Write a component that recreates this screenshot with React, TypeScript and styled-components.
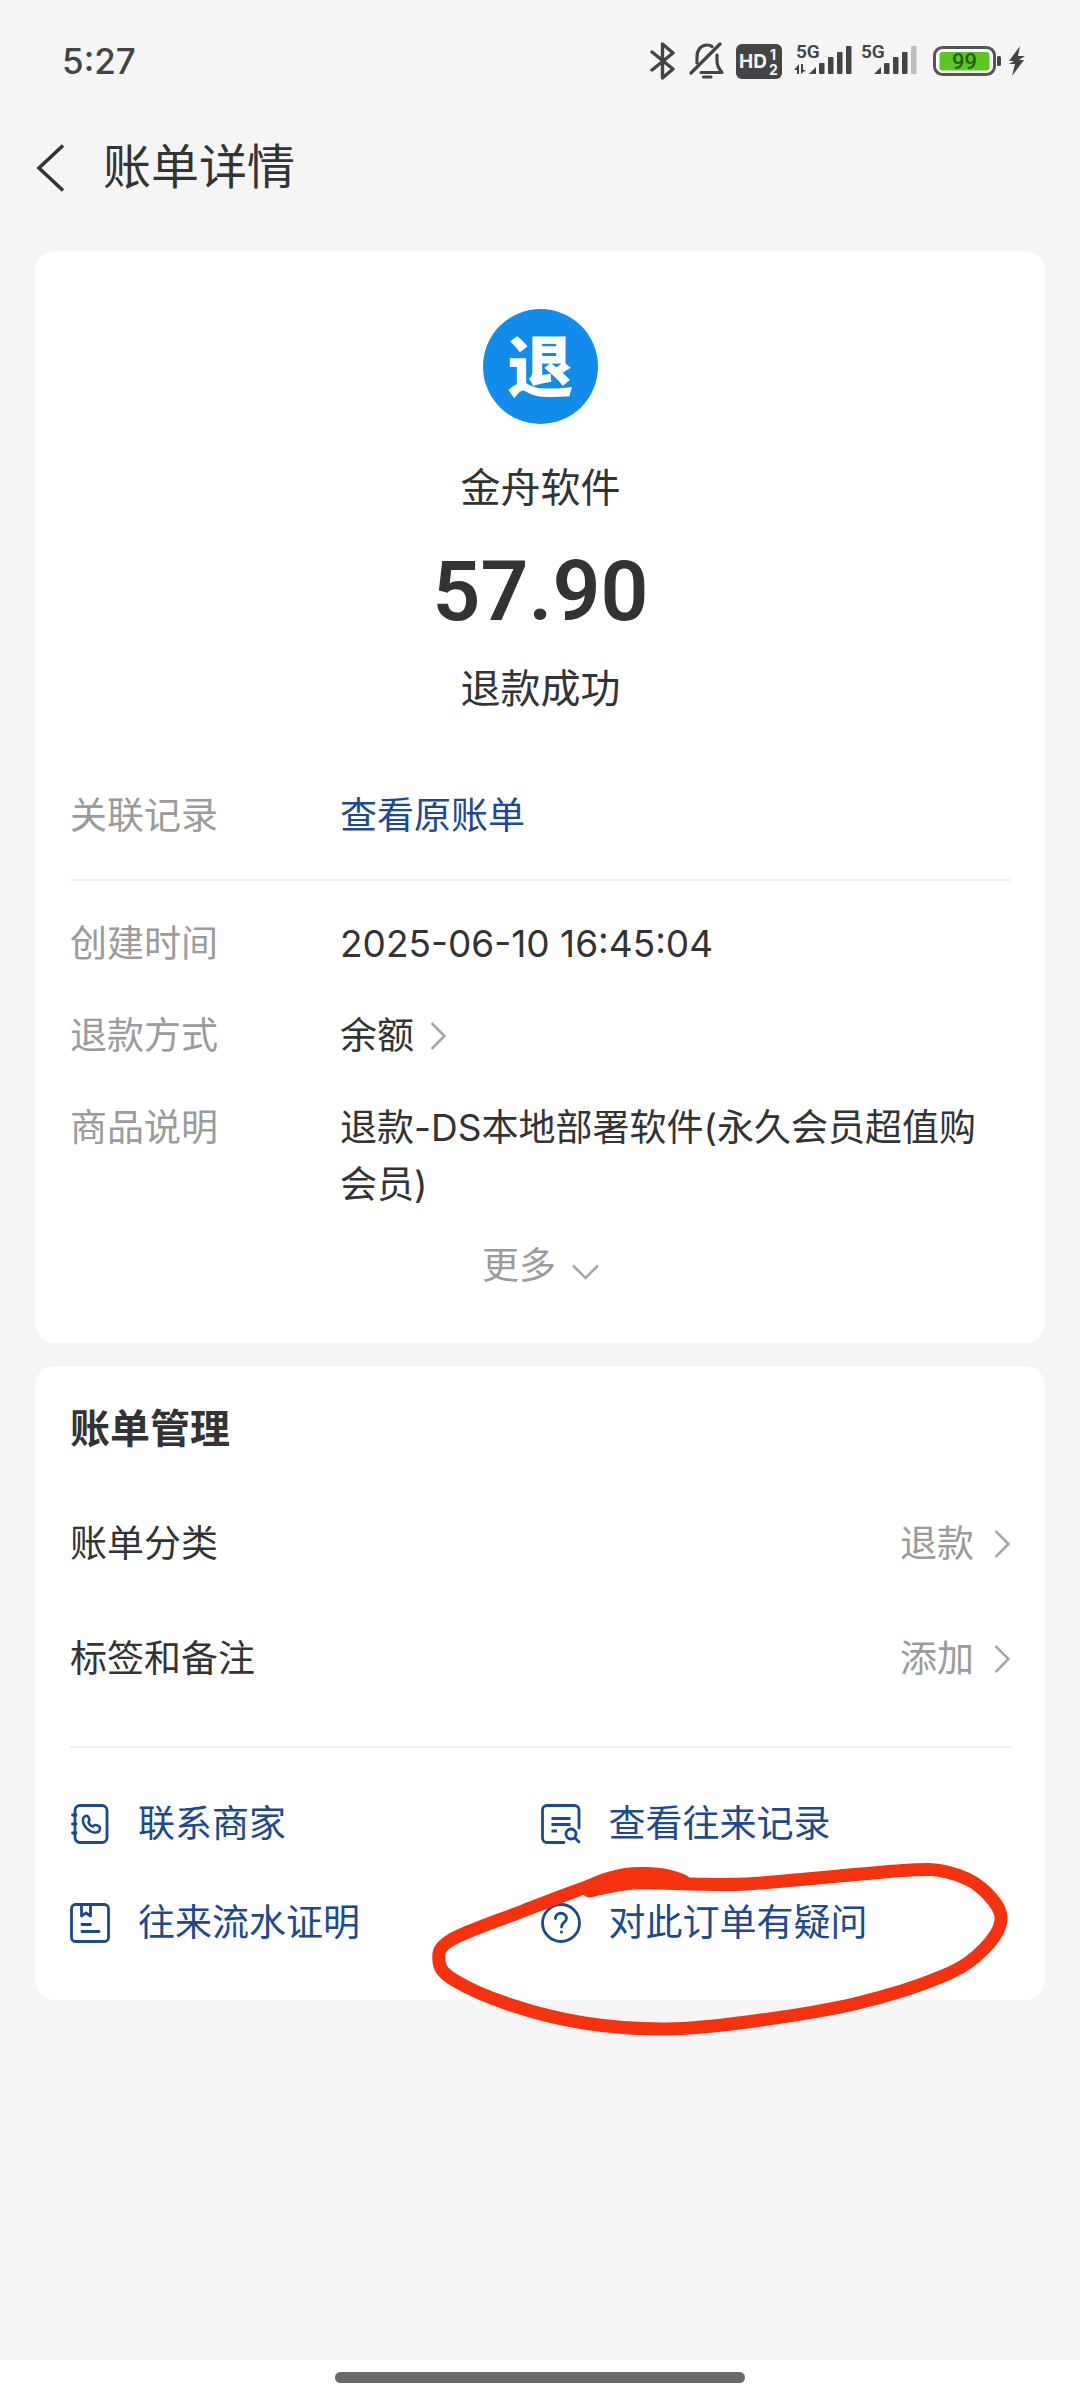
import React from 'react';
import styled, { createGlobalStyle } from 'styled-components';

const ink = '#333333';
const muted = '#9b9b9b';
const link = '#1c4a8f';
const surface = '#f5f5f5';

const GlobalStyle = createGlobalStyle`
  * { box-sizing: border-box; }
  body {
    margin: 0;
    background: ${surface};
    color: ${ink};
    font-family: Inter, "Noto Sans CJK SC", sans-serif;
    font-size: 37px;
    line-height: 57px;
  }
  button { font: inherit; color: inherit; background: none; border: 0; padding: 0; cursor: pointer; }
  a { color: ${link}; text-decoration: none; }
  h1, h2, p, dl, dd, ul { margin: 0; padding: 0; }
  svg { display: block; flex: none; }
`;

const Page = styled.div`
  min-height: 100vh;
  display: flex;
  flex-direction: column;
`;

const StatusBar = styled.div`
  height: 122px;
  padding: 0 54px 0 62px;
  display: flex;
  align-items: center;
  justify-content: space-between;
  color: #444444;
`;

const Clock = styled.time`
  font-size: 35px;
  font-weight: 500;
`;

const StatusIcons = styled.div`
  display: flex;
  align-items: center;
`;

const StatusSlot = styled.span<{ $gap: number }>`
  margin-left: ${(p) => p.$gap}px;
`;

const Header = styled.header`
  height: 88px;
  padding: 0 35px;
  display: flex;
  align-items: center;
`;

const BackButton = styled.button`
  width: 68px;
  height: 88px;
  padding-top: 4px;
  display: flex;
  align-items: center;
`;

const Title = styled.h1`
  font-size: 48px;
  font-weight: 400;
`;

const Content = styled.main`
  flex: 1;
  padding: 41px 35px;
  display: flex;
  flex-direction: column;
  gap: 23px;
`;

const Card = styled.section<{ $top: number }>`
  background: #ffffff;
  border-radius: 20px;
  padding: ${(p) => p.$top}px 34px 49px 35px;
`;

const Summary = styled.div`
  display: flex;
  flex-direction: column;
  align-items: center;
  margin-bottom: 70px;
  font-size: 40px;
  line-height: 56px;
`;

const Avatar = styled.div`
  width: 115px;
  height: 115px;
  border-radius: 50%;
  margin-bottom: 36px;
  display: grid;
  place-items: center;
  background: #128ceb;
  color: #ffffff;
  font-size: 66px;
  font-weight: 900;
`;

const Amount = styled.p`
  margin: 28px 0 21px;
  font-family: Roboto, sans-serif;
  font-size: 84px;
  line-height: 96px;
  font-weight: 600;
`;

const Details = styled.dl`
  display: flex;
  flex-direction: column;
  gap: 35px;
`;

const Detail = styled.div`
  display: grid;
  grid-template-columns: 270px 1fr;
`;

const Label = styled.dt`
  color: ${muted};
`;

const Value = styled.dd`
  padding-right: 16px;
`;

const Divider = styled.hr<{ $before: number; $after: number }>`
  height: 2px;
  border: 0;
  background: #f0f0f0;
  margin: ${(p) => p.$before}px 0 ${(p) => p.$after}px;
`;

const InlineButton = styled.button`
  display: flex;
  align-items: center;
  gap: 16px;
`;

const MoreButton = styled.button`
  display: flex;
  align-items: center;
  gap: 16px;
  margin: 24px auto 0;
  color: ${muted};
`;

const MoreArrow = styled.span`
  padding-top: 12px;
`;

const CardTitle = styled.h2`
  font-size: 40px;
  line-height: 56px;
  font-weight: 700;
`;

const Settings = styled.div`
  display: flex;
  flex-direction: column;
  gap: 58px;
  margin-top: 58px;
`;

const SettingRow = styled.button`
  display: flex;
  align-items: center;
  justify-content: space-between;
`;

const SettingValue = styled.span`
  display: flex;
  align-items: center;
  gap: 20px;
  color: ${muted};
`;

const Actions = styled.ul`
  list-style: none;
  display: grid;
  grid-template-columns: 1fr 1fr;
  row-gap: 42px;
`;

const Action = styled.li`
  position: relative;
`;

const ActionLink = styled.a`
  display: flex;
  align-items: center;
  gap: 28px;
`;

const Scribble = styled.svg`
  position: absolute;
  left: -120px;
  top: -44px;
  pointer-events: none;
`;

const NavBar = styled.footer`
  height: 43px;
  padding-top: 12px;
  background: #ffffff;
`;

const NavHandle = styled.div`
  width: 38%;
  height: 11px;
  margin: 0 auto;
  border-radius: 6px;
  background: #6a6a6a;
`;

const BluetoothIcon = () => (
  <svg width="26" height="38" viewBox="0 0 26 38" fill="none" stroke="#444" strokeWidth="3.4" strokeLinejoin="round" strokeLinecap="round">
    <path d="M2 10 L23 27 L12.5 36 V2 L23 11 L2 28" />
  </svg>
);

const MutedBellIcon = () => (
  <svg width="36" height="38" viewBox="0 0 36 38" fill="none" stroke="#444" strokeWidth="3.2" strokeLinecap="round" strokeLinejoin="round">
    <path d="M2 31 L31 2" />
    <path d="M8 21 V15 C8 8 12 3 18 3 C20 3 22 3.5 23 4.5" />
    <path d="M28 13 V19 C28 24 30 27 33 30.5 H12" />
    <path d="M14.5 35 H22" />
  </svg>
);

const HdIcon = () => (
  <svg width="46" height="35" viewBox="0 0 46 35" fill="#f5f5f5" fontFamily="Inter, sans-serif" fontWeight="700">
    <rect width="46" height="35" rx="6" fill="#444" />
    <text x="3" y="24" fontSize="19">HD</text>
    <text x="34" y="16" fontSize="14">1</text>
    <text x="33" y="31" fontSize="14">2</text>
  </svg>
);

const bars = [
  { x: 25, y: 22 },
  { x: 34, y: 16 },
  { x: 43, y: 11 },
  { x: 52, y: 5 },
];

const SignalIcon = ({ transfer, weak }: { transfer?: boolean; weak?: boolean }) => (
  <svg width="60" height="40" viewBox="0 0 60 40" fill="#444">
    <text x="2" y="17" fontSize="19" fontWeight="600" fontFamily="Roboto, sans-serif">5G</text>
    <path d="M15 33 L22 26 V33 Z" />
    {bars.map((b, i) => (
      <rect key={b.x} x={b.x} y={b.y} width="5.5" height={33 - b.y} rx="1" fill={weak && i === 3 ? '#bdbdbd' : '#444'} />
    ))}
    {transfer && <path d="M0 29 L5 23 V33 H3 V29 Z M7 23 H9 V29 H12 L7 33 Z" />}
  </svg>
);

const BatteryIcon = () => (
  <svg width="69" height="31" viewBox="0 0 69 31">
    <rect x="1.5" y="1.5" width="60" height="27" rx="8" fill="#fff" stroke="#555" strokeWidth="3" />
    <rect x="6.5" y="6" width="50" height="18.5" rx="3" fill="#5ac81f" />
    <rect x="64" y="10" width="4" height="10" rx="1.5" fill="#444" />
    <text x="31.5" y="23" textAnchor="middle" fontSize="22" fontWeight="500" fontFamily="Roboto, sans-serif" fill="#2b5a16">99</text>
  </svg>
);

const BoltIcon = () => (
  <svg width="18" height="30" viewBox="0 0 18 30" fill="#444">
    <path d="M12 0 L1 15 H6 L1 18 L7 18 L4 30 L16 14 H11 L17 10 H10 Z" />
  </svg>
);

const BackIcon = () => (
  <svg width="30" height="48" viewBox="0 0 30 48" fill="none" stroke="#333" strokeWidth="3.5">
    <path d="M28 1.5 L4 24 L28 46.5" />
  </svg>
);

const ChevronRight = () => (
  <svg width="17" height="28" viewBox="0 0 17 28" fill="none" stroke="#a6a6a6" strokeWidth="2.5">
    <path d="M1.5 1 L14.5 14 L1.5 27" />
  </svg>
);

const ChevronDown = () => (
  <svg width="27" height="16" viewBox="0 0 27 16" fill="none" stroke="#a6a6a6" strokeWidth="2.5">
    <path d="M1 1.5 L13.5 14 L26 1.5" />
  </svg>
);

const IconFrame = ({ children }: { children: React.ReactNode }) => (
  <svg width="40" height="40" viewBox="0 0 40 40" fill="none" stroke={link} strokeWidth="2.8" strokeLinecap="round" strokeLinejoin="round" aria-hidden="true">
    {children}
  </svg>
);

const ContactIcon = () => (
  <IconFrame>
    <rect x="5" y="1.5" width="32" height="37" rx="5" />
    <path d="M2.5 11 H6 M2.5 20 H6 M2.5 29 H6" />
    <path strokeWidth="2.5" d="M13 15.5 C13 13 16.5 10.5 18 12.5 C19.5 14.5 20.5 16 18.5 18 C19 20.5 21 22 23 22.5 C24.5 20.5 26 20.5 28.5 22 C31.5 24 29.5 28.5 26 28.5 C19 29 12.5 21.5 13 15.5 Z" />
  </IconFrame>
);

const RecordsIcon = () => (
  <IconFrame>
    <path d="M23 38.5 H6 C3.5 38.5 1.5 36.5 1.5 34 V6 C1.5 3.5 3.5 1.5 6 1.5 H33.5 C36 1.5 38 3.5 38 6 V24" />
    <path strokeLinecap="butt" d="M10.5 14.5 H29.5 M10.5 20.5 H29.5 M10.5 27 H16" />
    <circle cx="30" cy="30" r="5" />
    <path d="M34 34 L38 38" />
  </IconFrame>
);

const StatementIcon = () => (
  <IconFrame>
    <rect x="1.5" y="1.5" width="37" height="37" rx="4" />
    <path d="M11.5 2 V13 L16 10 L20.5 13 V2" />
    <path d="M12 21.5 H20.5 M12 28.5 H29" />
  </IconFrame>
);

const QuestionIcon = () => (
  <IconFrame>
    <circle cx="20" cy="20" r="18.5" />
    <path d="M14.5 15.5 C14.5 8.5 25.5 8.5 25.5 15.5 C25.5 19 20.5 19.5 20.5 24" />
    <path d="M20.5 29 V29.2" />
  </IconFrame>
);

const strokePoints: [number, number][] = [
  [588, 1886], [522, 1911], [450, 1940], [438, 1961], [453, 1980], [510, 2005], [583, 2023],
  [665, 2029], [746, 2022], [853, 2004], [942, 1976], [983, 1949], [1000, 1917],
  [979, 1887], [946, 1872], [910, 1870], [828, 1877], [746, 1884], [689, 1884], [632, 1883], [588, 1891],
];

// Joins the pen samples with a Catmull-Rom spline.
const smooth = (pts: [number, number][]) =>
  pts.slice(1).reduce((d, p, i) => {
    const a = pts[Math.max(i - 1, 0)];
    const b = pts[i];
    const c = pts[Math.min(i + 2, pts.length - 1)];
    return `${d} C${b[0] + (p[0] - a[0]) / 6} ${b[1] + (p[1] - a[1]) / 6} ${p[0] - (c[0] - b[0]) / 6} ${p[1] - (c[1] - b[1]) / 6} ${p[0]} ${p[1]}`;
  }, `M${pts[0][0]} ${pts[0][1]}`);

const RedCircle = () => (
  <Scribble width="600" height="200" viewBox="420 1850 600 200" fill="none" aria-hidden="true">
    <path d={smooth(strokePoints)} stroke="#f5310e" strokeWidth="13" strokeLinecap="round" strokeLinejoin="round" />
    <path
      d="M580 1883 C600 1872 622 1866 644 1867 C661 1867 679 1871 688 1877 L689 1889 C655 1889 625 1887 603 1893 L590 1897 Z"
      fill="#f5310e"
    />
  </Scribble>
);

export default function App() {
  return (
    <Page>
      <GlobalStyle />
      <StatusBar>
        <Clock>5:27</Clock>
        <StatusIcons>
          <StatusSlot $gap={0}><BluetoothIcon /></StatusSlot>
          <StatusSlot $gap={13}><MutedBellIcon /></StatusSlot>
          <StatusSlot $gap={11}><HdIcon /></StatusSlot>
          <StatusSlot $gap={12}><SignalIcon transfer /></StatusSlot>
          <StatusSlot $gap={5}><SignalIcon weak /></StatusSlot>
          <StatusSlot $gap={14}><BatteryIcon /></StatusSlot>
          <StatusSlot $gap={6}><BoltIcon /></StatusSlot>
        </StatusIcons>
      </StatusBar>

      <Header>
        <BackButton aria-label="返回"><BackIcon /></BackButton>
        <Title>账单详情</Title>
      </Header>

      <Content>
        <Card $top={58}>
          <Summary>
            <Avatar>退</Avatar>
            <p>金舟软件</p>
            <Amount>57.90</Amount>
            <p>退款成功</p>
          </Summary>

          <Details>
            <Detail>
              <Label>关联记录</Label>
              <Value><a href="#original">查看原账单</a></Value>
            </Detail>
          </Details>
          <Divider $before={35} $after={34} />
          <Details>
            <Detail>
              <Label>创建时间</Label>
              <Value>2025-06-10 16:45:04</Value>
            </Detail>
            <Detail>
              <Label>退款方式</Label>
              <Value><InlineButton>余额<ChevronRight /></InlineButton></Value>
            </Detail>
            <Detail>
              <Label>商品说明</Label>
              <Value>退款-DS本地部署软件(永久会员超值购会员)</Value>
            </Detail>
          </Details>
          <MoreButton>更多<MoreArrow><ChevronDown /></MoreArrow></MoreButton>
        </Card>

        <Card $top={35}>
          <CardTitle>账单管理</CardTitle>
          <Settings>
            <SettingRow>账单分类<SettingValue>退款<ChevronRight /></SettingValue></SettingRow>
            <SettingRow>标签和备注<SettingValue>添加<ChevronRight /></SettingValue></SettingRow>
          </Settings>
          <Divider $before={59} $after={47} />
          <Actions>
            <Action><ActionLink href="#contact"><ContactIcon />联系商家</ActionLink></Action>
            <Action><ActionLink href="#records"><RecordsIcon />查看往来记录</ActionLink></Action>
            <Action><ActionLink href="#statement"><StatementIcon />往来流水证明</ActionLink></Action>
            <Action><ActionLink href="#question"><QuestionIcon />对此订单有疑问</ActionLink><RedCircle /></Action>
          </Actions>
        </Card>
      </Content>

      <NavBar><NavHandle /></NavBar>
    </Page>
  );
}
